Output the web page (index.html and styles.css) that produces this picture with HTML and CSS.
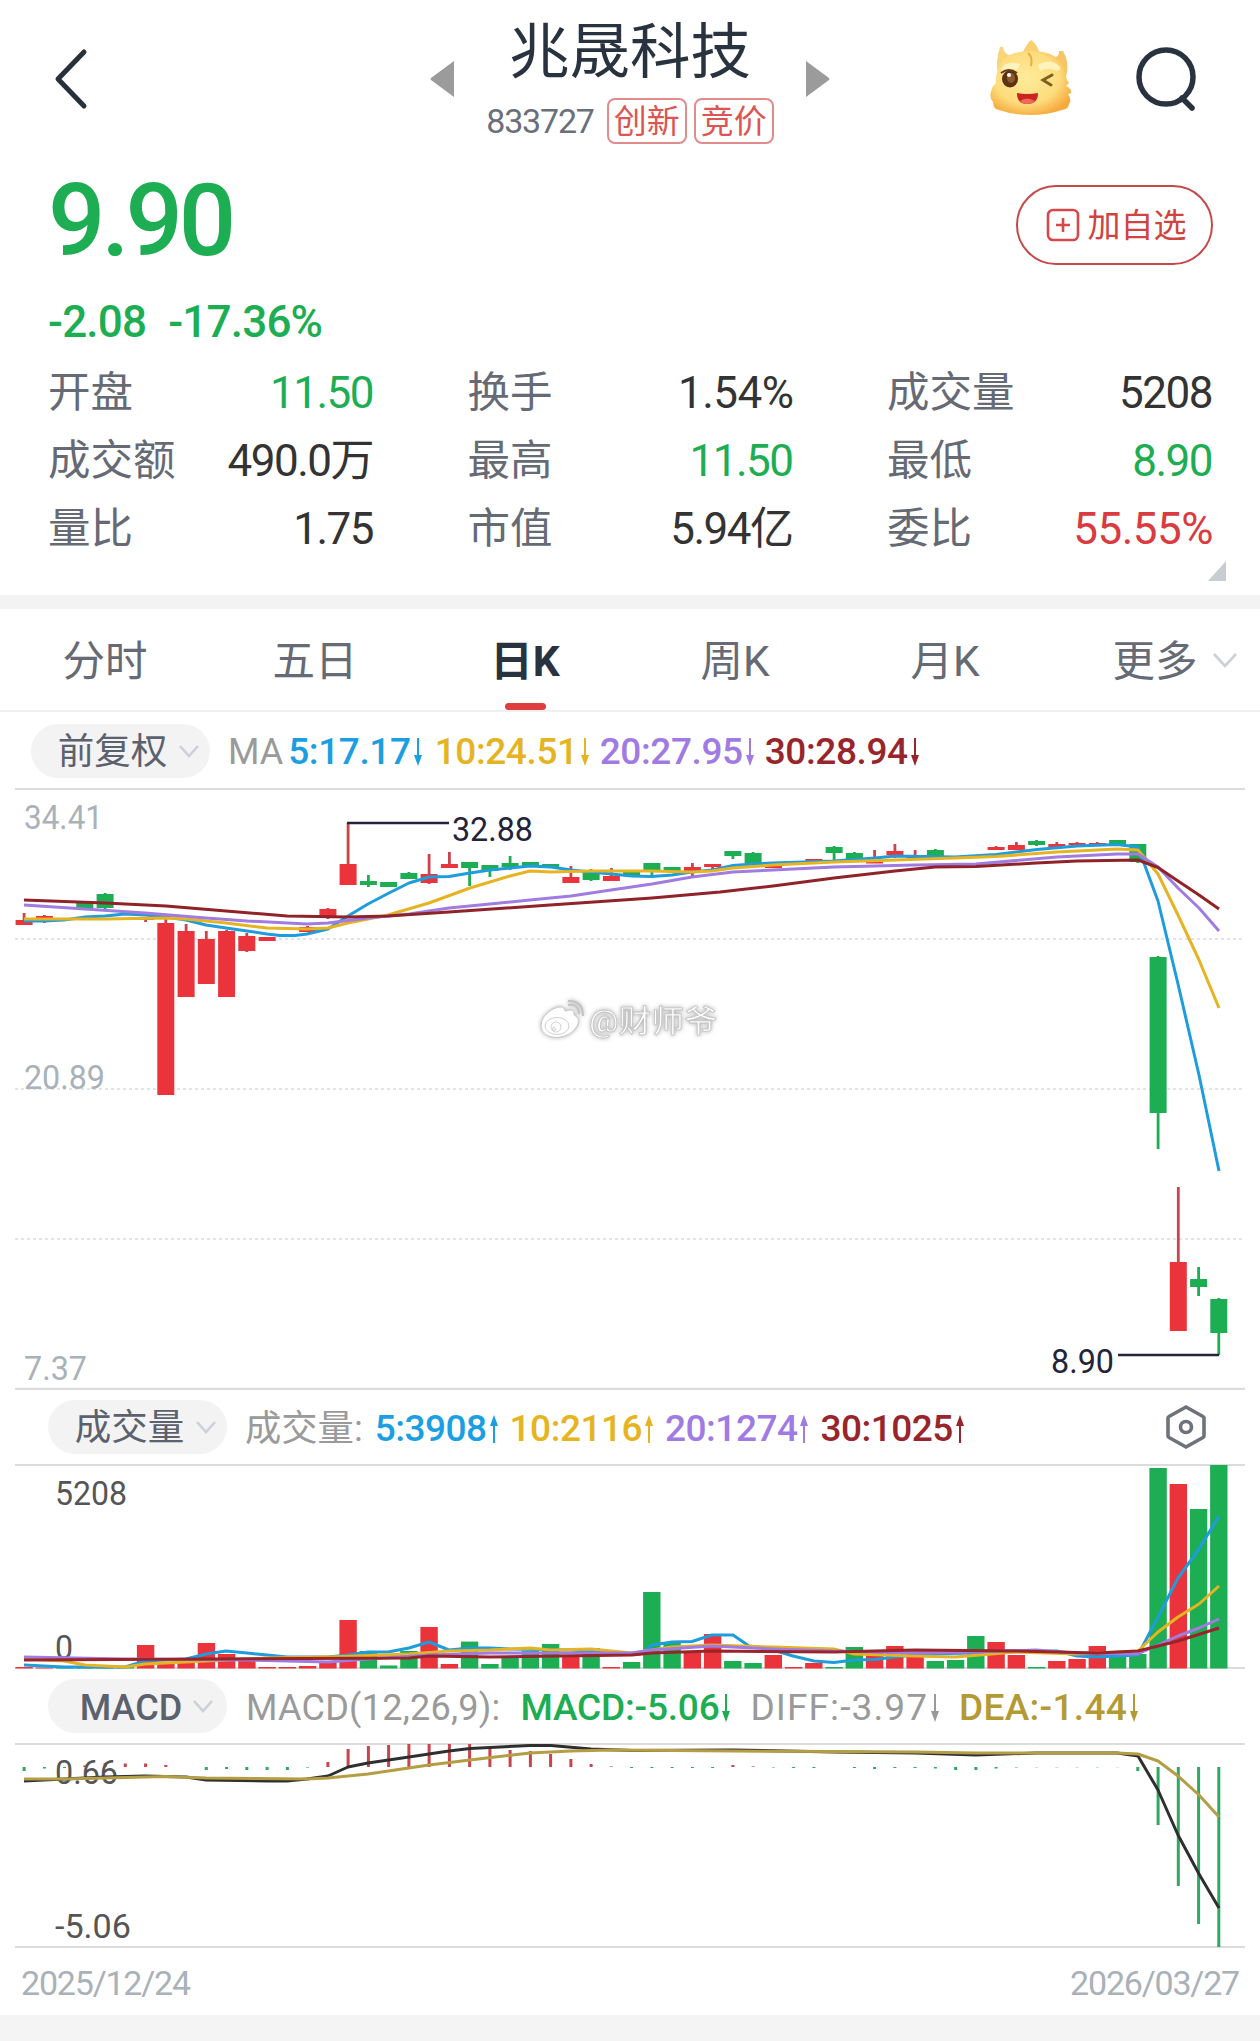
FILE: index.html
```html
<!DOCTYPE html>
<html lang="zh-CN">

<head>
    <meta charset="UTF-8">
    <meta name="viewport" content="width=device-width, initial-scale=1.0">
    <title>兆晟科技 833727</title>
    <link rel="stylesheet" href="styles.css">
</head>

<body>
    <div class="page">
        <header class="header">
            <svg class="back" width="34" height="62" viewBox="0 0 34 62"><path d="M30 4 L4 31 L30 58"/></svg>
            <div class="switcher">
                <svg width="24" height="36" viewBox="0 0 24 36"><path d="M24 0 V36 L1 19 Q0 18 1 17 Z" fill="#9b9b9b"/></svg>
                <div class="stock">
                    <h1>兆晟科技</h1>
                    <div class="code">
                        <span class="num">833727</span>
                        <span class="tag">创新</span>
                        <span class="tag">竞价</span>
                    </div>
                </div>
                <svg width="24" height="36" viewBox="0 0 24 36"><path d="M0 0 V36 L23 19 Q24 18 23 17 Z" fill="#9b9b9b"/></svg>
            </div>
            <div class="tools">
                <svg width="84" height="78" viewBox="0 0 84 78">
                    <defs>
                        <radialGradient id="face" cx="45%" cy="42%" r="62%">
                            <stop offset="0" stop-color="#ffeb9c"/>
                            <stop offset="0.65" stop-color="#fddc7d"/>
                            <stop offset="1" stop-color="#f6a93c"/>
                        </radialGradient>
                    </defs>
                    <path d="M11 7 Q6 22 9 34 L26 16 Q15 16 14 7 Z" fill="#f9d57a"/>
                    <path d="M74 11 Q81 22 77 37 L59 18 Q71 19 70 11 Z" fill="#f6c566"/>
                    <path d="M33 14 Q38 3 42 0 Q49 5 51 15 Z" fill="#f9cf70"/>
                    <path d="M9 30 Q13 11 42 11 Q71 11 76 31 Q77 40 80 43 L77 46 Q83 49 82 53 L79 54 Q83 60 80 64 Q80 69 73 70 Q58 75 42 75 Q24 75 10 70 Q4 69 4 62 Q0 57 2 52 Q3 46 7 43 Q6 38 9 30 Z" fill="url(#face)"/>
                    <path d="M12 29 Q17 20 31 24 Q30 31 23 30 Q17 31 13 34 Z M49 25 Q62 17 71 27 Q72 32 66 30 Q58 27 51 31 Z" fill="#fff3bd"/>
                    <path d="M39 13 Q44 17 42 26" fill="none" stroke="#e6ad48" stroke-width="2"/>
                    <ellipse cx="21" cy="39" rx="8" ry="8.5" fill="#5a3312"/>
                    <ellipse cx="22" cy="38" rx="4" ry="5" fill="#8d5a2b"/>
                    <circle cx="20" cy="35" r="2" fill="#fff"/>
                    <path d="M12 33 Q20 27 28 33" fill="none" stroke="#6b3d14" stroke-width="2"/>
                    <path d="M63 35 L54 40 L62 45" fill="none" stroke="#80601f" stroke-width="3" stroke-linecap="round"/>
                    <path d="M28 53 Q38 55 49 53 Q49 64 38 64 Q28 64 28 53 Z" fill="#c9251e"/>
                    <path d="M31 61 Q38 56 46 61 Q43 64 38 64 Q33 64 31 61 Z" fill="#f0695a"/>
                </svg>
                <svg width="64" height="66" viewBox="0 0 64 66" fill="none" stroke="#28333f" stroke-width="5.5">
                    <circle cx="31" cy="31" r="27"/>
                    <path d="M47 52 L57 62" stroke-linecap="round"/>
                </svg>
            </div>
        </header>

        <section class="quote">
            <div class="price-row">
                <div class="price down">9.90</div>
                <button class="add" type="button">
                    <svg width="34" height="34" viewBox="0 0 34 34" fill="none" stroke="#d5494b" stroke-width="2.6">
                        <rect x="2" y="2" width="30" height="30" rx="5"/>
                        <path d="M17 10 V24 M10 17 H24"/>
                    </svg>
                    <span>加自选</span>
                </button>
            </div>
            <div class="change down"><span>-2.08</span><span>-17.36%</span></div>
            <dl class="stats">
                <div><dt>开盘</dt><dd class="down">11.50</dd></div>
                <div><dt>换手</dt><dd class="pct">1.54%</dd></div>
                <div><dt>成交量</dt><dd>5208</dd></div>
                <div><dt>成交额</dt><dd>490.0万</dd></div>
                <div><dt>最高</dt><dd class="down">11.50</dd></div>
                <div><dt>最低</dt><dd class="down">8.90</dd></div>
                <div><dt>量比</dt><dd>1.75</dd></div>
                <div><dt>市值</dt><dd>5.94亿</dd></div>
                <div><dt>委比</dt><dd class="up pct">55.55%</dd></div>
            </dl>
            <svg class="corner" width="18" height="20" viewBox="0 0 18 20"><path d="M18 0 V20 H0 Z" fill="#c9cdd2"/></svg>
        </section>

        <nav class="tabs">
            <a>分时</a>
            <a>五日</a>
            <a class="active">日K</a>
            <a>周K</a>
            <a>月K</a>
            <a class="more">更多<svg class="chevron" width="26" height="16" viewBox="0 0 26 16"><path d="M2 2 L13 14 L24 2"/></svg></a>
        </nav>

        <div class="legend legend-ma">
            <span class="pill"><span>前复权</span><svg class="chevron" width="22" height="14" viewBox="0 0 22 14"><path d="M2 2 L11 12 L20 2"/></svg></span>
            <span class="name">MA</span>
            <span class="item c5">5:17.17<svg class="arrow" viewBox="0 0 8 28"><path d="M4 0 V20"/><path class="tip" d="M0 17 H8 L4 28 Z"/></svg></span>
            <span class="item c10">10:24.51<svg class="arrow" viewBox="0 0 8 28"><path d="M4 0 V20"/><path class="tip" d="M0 17 H8 L4 28 Z"/></svg></span>
            <span class="item c20">20:27.95<svg class="arrow" viewBox="0 0 8 28"><path d="M4 0 V20"/><path class="tip" d="M0 17 H8 L4 28 Z"/></svg></span>
            <span class="item c30">30:28.94<svg class="arrow" viewBox="0 0 8 28"><path d="M4 0 V20"/><path class="tip" d="M0 17 H8 L4 28 Z"/></svg></span>
        </div>

        <svg id="kline" class="chart" width="1260" height="602" viewBox="0 788 1260 602"></svg>

        <div class="legend legend-vol">
            <span class="pill"><span>成交量</span><svg class="chevron" width="22" height="14" viewBox="0 0 22 14"><path d="M2 2 L11 12 L20 2"/></svg></span>
            <span class="name">成交量:</span>
            <span class="item c5">5:3908<svg class="arrow" viewBox="0 0 8 28"><path d="M4 8 V28"/><path class="tip" d="M0 11 H8 L4 0 Z"/></svg></span>
            <span class="item c10">10:2116<svg class="arrow" viewBox="0 0 8 28"><path d="M4 8 V28"/><path class="tip" d="M0 11 H8 L4 0 Z"/></svg></span>
            <span class="item c20">20:1274<svg class="arrow" viewBox="0 0 8 28"><path d="M4 8 V28"/><path class="tip" d="M0 11 H8 L4 0 Z"/></svg></span>
            <span class="item c30">30:1025<svg class="arrow" viewBox="0 0 8 28"><path d="M4 8 V28"/><path class="tip" d="M0 11 H8 L4 0 Z"/></svg></span>
            <svg class="settings" width="42" height="46" viewBox="0 0 42 46"><path d="M21 3 L38 12.5 Q39 13 39 14 V32 Q39 33 38 33.5 L21 43 L4 33.5 Q3 33 3 32 V14 Q3 13 4 12.5 Z"/><circle cx="21" cy="23" r="5.5"/></svg>
        </div>

        <svg id="volume" class="chart" width="1260" height="205" viewBox="0 1464 1260 205"></svg>

        <div class="legend legend-macd">
            <span class="pill"><span>MACD</span><svg class="chevron" width="22" height="14" viewBox="0 0 22 14"><path d="M2 2 L11 12 L20 2"/></svg></span>
            <span class="name">MACD(12,26,9):</span>
            <span class="item down">MACD:-5.06<svg class="arrow" viewBox="0 0 8 28"><path d="M4 0 V20"/><path class="tip" d="M0 17 H8 L4 28 Z"/></svg></span>
            <span class="item diff">DIFF:-3.97<svg class="arrow" viewBox="0 0 8 28"><path d="M4 0 V20"/><path class="tip" d="M0 17 H8 L4 28 Z"/></svg></span>
            <span class="item dea">DEA:-1.44<svg class="arrow" viewBox="0 0 8 28"><path d="M4 0 V20"/><path class="tip" d="M0 17 H8 L4 28 Z"/></svg></span>
        </div>

        <svg id="macd" class="chart" width="1260" height="206" viewBox="0 1743 1260 206"></svg>

        <div class="dates"><span>2025/12/24</span><span>2026/03/27</span></div>
        <footer class="bottom"></footer>
    </div>

    <script src="charts.js"></script>
</body>

</html>
```

FILE: styles.css
```css
* {
    margin: 0;
    padding: 0;
    box-sizing: border-box;
}

body {
    background: #fff;
    color: #333;
    font-family: Roboto, "Noto Sans CJK SC", sans-serif;
}

svg {
    display: block;
    flex: none;
}

.page {
    width: 1260px;
    height: 2041px;
    display: flex;
    flex-direction: column;
    overflow: hidden;
}

.down {
    color: #1dad52;
}

.up {
    color: #d93b40;
}

/* header */
.header {
    height: 157px;
    display: grid;
    grid-template-columns: 1fr auto 1fr;
    align-items: center;
    padding: 0 61px 0 54px;
}

.back path {
    fill: none;
    stroke: #28303b;
    stroke-width: 5;
    stroke-linecap: round;
    stroke-linejoin: round;
}

.switcher {
    display: flex;
    align-items: center;
    margin-left: 7px;
}

.stock {
    width: 352px;
    height: 157px;
    padding-top: 11px;
    text-align: center;
}

.stock h1 {
    font-size: 60.5px;
    font-weight: 400;
    line-height: 84px;
    color: #28333f;
}

.code {
    display: flex;
    justify-content: center;
    align-items: center;
    gap: 7px;
    margin-top: 2px;
}

.num {
    font-size: 34px;
    line-height: 46px;
    padding-top: 1px;
    letter-spacing: -1.2px;
    color: #6b6f7a;
    margin-right: 6px;
}

.tag {
    height: 46px;
    width: 80px;
    border: 2px solid #e08c8c;
    border-radius: 8px;
    font-size: 33px;
    line-height: 43px;
    color: #dc5552;
}

.tools {
    display: flex;
    align-items: center;
    justify-content: flex-end;
    gap: 62px;
}

/* quote */
.quote {
    height: 438px;
    padding: 0 48px;
    position: relative;
}

.price-row {
    height: 124px;
    display: flex;
    justify-content: space-between;
    align-items: center;
}

.price {
    font-size: 101px;
    font-weight: 500;
    letter-spacing: -4px;
    padding-top: 3px;
}

.add {
    width: 197px;
    height: 80px;
    margin: 12px -1px 0 0;
    padding-left: 3px;
    display: flex;
    align-items: center;
    justify-content: center;
    gap: 8px;
    background: #fff;
    border: 2px solid #c44a4a;
    border-radius: 40px;
    font-family: inherit;
    font-size: 33px;
    line-height: 74px;
    color: #cf4341;
}

.add span {
    margin-top: 1px;
}

.change {
    height: 78px;
    line-height: 82px;
    font-size: 44px;
    letter-spacing: -0.8px;
    display: flex;
    gap: 22px;
    font-weight: 500;
}

.stats {
    display: grid;
    grid-template-columns: repeat(3, 325px);
    justify-content: space-between;
}

.stats div {
    height: 68px;
    line-height: 68px;
    display: flex;
    justify-content: space-between;
}

.stats dt {
    font-size: 42.5px;
    color: #656a75;
}

.stats dd {
    font-size: 44px;
    letter-spacing: -1.5px;
}

.stats .pct {
    letter-spacing: -0.5px;
    margin-right: -1px;
}

.corner {
    position: absolute;
    right: 34px;
    bottom: 14px;
}

/* tabs */
.tabs {
    height: 117px;
    display: grid;
    grid-template-columns: repeat(6, 1fr);
    border-top: 14px solid #f3f3f3;
    border-bottom: 2px solid #f0f0f0;
}

.tabs a {
    position: relative;
    text-align: center;
    font-size: 42.5px;
    line-height: 105px;
    height: 101px;
    color: #656a75;
}

.tabs .active {
    color: #28333f;
    font-weight: 700;
}

.tabs .active::after {
    content: "";
    position: absolute;
    left: 85px;
    bottom: 0;
    width: 41px;
    height: 7px;
    border-radius: 4px;
    background: #e03d3e;
}

.more .chevron {
    position: absolute;
    right: 22px;
    top: 43px;
}

.chevron path {
    fill: none;
    stroke: #cdd0d4;
    stroke-width: 2.6;
}

/* indicator rows */
.legend {
    display: flex;
    align-items: center;
    font-size: 37px;
    white-space: nowrap;
}

.legend-ma {
    height: 76px;
    padding: 2px 0 0 31px;
}

.legend-vol {
    height: 74px;
    padding: 0 54px 0 48px;
}

.legend-macd {
    height: 74px;
    padding: 0 0 0 48px;
}

.pill {
    width: 179px;
    height: 54px;
    border-radius: 27px;
    background: #f3f3f4;
    display: flex;
    align-items: center;
    justify-content: center;
    gap: 11px;
    padding-left: 17px;
    font-size: 36.5px;
    line-height: 50px;
    color: #5b616d;
}

.pill span {
    margin-top: 1px;
}

.name {
    margin-left: 18px;
    color: #9a9a9a;
    font-size: 36px;
    line-height: 54px;
}

.item {
    display: flex;
    align-items: center;
    margin-left: 11px;
    font-weight: 500;
    line-height: 54px;
}

.arrow {
    width: 8px;
    height: 28px;
    margin-left: 3px;
    fill: none;
    stroke: currentColor;
    stroke-width: 2;
}

.arrow .tip {
    fill: currentColor;
    stroke: none;
}

.legend-ma .item {
    letter-spacing: -0.4px;
    padding-top: 1px;
}

.legend-ma .name {
    margin-right: -6px;
    padding-top: 1px;
}

.legend-ma .c10 {
    margin-left: 13px;
}

.legend-vol .name {
    padding-top: 4px;
    font-size: 36.3px;
}

.legend-vol .item {
    letter-spacing: -0.5px;
    margin-left: 12px;
    padding-top: 4px;
}

.legend-macd .item,
.legend-macd .name {
    padding-top: 4px;
}

.legend-macd .item {
    margin-left: 20px;
    letter-spacing: -0.2px;
}

.legend-macd .name {
    margin-left: 19px;
    letter-spacing: 0.25px;
}

.legend-macd .pill {
    font-weight: 500;
    font-size: 36px;
    gap: 10px;
    padding-left: 19px;
}

.legend-macd .pill span {
    margin-top: 3px;
}

.c5 {
    color: #1b9fe2;
}

.c10 {
    color: #e6b422;
}

.c20 {
    color: #a07be4;
}

.c30 {
    color: #98252b;
}

.legend .diff {
    color: #9a9a9a;
    font-weight: 400;
    letter-spacing: 1.1px;
}

.legend .dea {
    color: #b39a35;
    letter-spacing: 0.3px;
}

.settings {
    margin-left: auto;
    fill: none;
    stroke: #6d727b;
    stroke-width: 3.6;
}

.legend-vol .settings {
    margin-right: -1px;
}

/* charts */
.chart text {
    font-size: 34px;
}

.axis {
    fill: #a9b1b9;
}

.axis-dark {
    fill: #555;
}

.mark {
    fill: #23233a;
}

.watermark {
    fill: #fff;
    stroke: #c4c4c4;
    stroke-width: 0.8;
    filter: drop-shadow(0 0 2px #aaa);
}

.dates {
    height: 66px;
    padding: 2px 21px 0 21px;
    display: flex;
    justify-content: space-between;
    align-items: center;
    font-size: 34px;
    letter-spacing: -1.2px;
    color: #a9b1b9;
}

.bottom {
    flex: 1;
    background: #f4f4f4;
}
```

FILE: charts.js
```javascript
const RED = '#ea333b';
const GREEN = '#1dad52';
const WICK_RED = '#c9444b';
const X0 = 24.1;
const STEP = 20.25;

const x = i => X0 + STEP * i;
const rect = (cx, w, top, bottom, fill) =>
    `<rect x="${(cx - w / 2).toFixed(1)}" y="${top}" width="${w}" height="${(bottom - top).toFixed(1)}" fill="${fill}"/>`;
const hline = (y, w = 2, x1 = 15, x2 = 1245, color = '#dcdcdc') =>
    `<path d="M${x1} ${y} H${x2}" stroke="${color}" stroke-width="${w}"/>`;
const dashed = y =>
    `<path d="M15 ${y} H1245" stroke="#d9dddf" stroke-width="1.6" stroke-dasharray="3 3"/>`;
const line = (points, color, w = 3) =>
    `<polyline points="${points}" fill="none" stroke="${color}" stroke-width="${w}" stroke-linejoin="round"/>`;
const label = (tx, ty, width, cls, text) =>
    `<text x="${tx}" y="${ty}" textLength="${width}" lengthAdjust="spacingAndGlyphs" class="${cls}">${text}</text>`;

// [index, r|g, body top, body bottom, wick top, wick bottom]
const candles = [
    [0, 'r', 920, 925, 913, 925], [1, 'r', 916, 922, 915, 923], [3, 'g', 902, 908, 902, 908],
    [4, 'g', 894, 908, 893, 910], [6, 'r', 919, 920, 918, 922], [7, 'r', 923, 1095, 919, 1095],
    [8, 'r', 931, 997, 924, 997], [9, 'r', 939, 984, 931, 984], [10, 'r', 931, 997, 930, 997],
    [11, 'r', 936, 951, 933, 952], [12, 'r', 937, 941, 937, 941], [14, 'r', 927, 932, 926, 932],
    [15, 'r', 909, 918, 908, 919], [16, 'r', 864, 885, 823, 885], [17, 'g', 881, 885, 875, 887],
    [18, 'g', 882, 887, 882, 887], [19, 'g', 873, 879, 872, 879], [20, 'r', 874, 883, 854, 884],
    [21, 'r', 864, 868, 852, 868], [22, 'g', 862, 868, 862, 886], [23, 'g', 865, 871, 865, 877],
    [24, 'g', 863, 867, 856, 870], [25, 'g', 862, 866, 862, 866], [26, 'g', 864, 867, 864, 867],
    [27, 'r', 877, 883, 866, 883], [28, 'g', 872, 880, 869, 881], [29, 'r', 876, 881, 868, 881],
    [30, 'g', 872, 875, 872, 875], [31, 'g', 863, 870, 863, 875], [32, 'g', 867, 872, 867, 872],
    [33, 'r', 867, 871, 863, 876], [34, 'r', 864, 867, 864, 869], [35, 'g', 851, 856, 851, 859],
    [36, 'g', 853, 863, 852, 868], [37, 'r', 865, 868, 865, 868], [38, 'r', 863, 865, 863, 865],
    [39, 'r', 859, 863, 859, 863], [40, 'g', 847, 853, 846, 860], [41, 'g', 853, 860, 852, 860],
    [42, 'r', 862, 863.5, 850, 858], [43, 'r', 851, 855, 844, 858], [44, 'r', 857, 858, 850, 858],
    [45, 'g', 850, 857, 849, 857], [48, 'r', 847, 850, 846, 850], [49, 'r', 845, 850, 842, 850],
    [50, 'g', 841, 845, 840, 846], [51, 'r', 844, 847, 842, 847], [52, 'r', 843, 845, 842, 845],
    [53, 'r', 843, 845, 842, 845], [54, 'g', 840, 845, 840, 845], [55, 'g', 844, 862, 844, 863],
    [56, 'g', 957, 1113, 956, 1149], [57, 'r', 1262, 1331, 1187, 1331], [58, 'g', 1279, 1287, 1267, 1296],
    [59, 'g', 1299, 1333, 1298, 1355]
];

const ma5 = '24,921 44,921 64,920 85,917 105,916 125,914 145,915 166,917 186,920 206,925 226,928 247,931 267,934 280,935.5 295,935.5 307,934 328,929 348,916 368,904 388,893.5 409,883 429,877 449,876.5 470,873 490,870 510,868 530,866 551,867 571,870 591,872 611,874 632,876 652,876.5 672,875 692,872 712,870 733,865.5 753,864 773,863 834,861 875,858 895,856 955,857 996,854.5 1037,849.5 1077,846 1117,844.5 1138,847 1158,901 1178,984 1199,1075 1219,1171';
const ma10 = '24,919 105,919 166,918 186,919 226,923 267,928 307,929 328,928 348,923 388,915 429,903 470,888 510,876 530,871 551,872 590,871 650,871 692,872 712,871 733,868 773,865 834,862 895,860 955,858 996,856.5 1057,852 1117,849 1138,850 1158,874 1178,915 1199,960 1219,1008';
const ma20 = '24,905 85,909 145,913 206,918 247,921 307,924 328,923 368,918 409,914 449,908 490,904 530,900 571,896 611,890 652,884 692,877 733,872 773,870 834,867 915,865 976,864 1057,857 1117,854 1138,854 1158,867 1178,888 1199,908 1219,931';
const ma30 = '24,900 105,903 166,906 226,911 287,916 348,917 388,916 449,912 550,905 652,898 720,892 773,886 834,878 895,871 935,867 976,866.5 1036,863 1077,861 1138,860 1158,867.5 1178,881 1199,895 1219,909';

let k = hline(789) + dashed(939) + dashed(1089) + dashed(1239) + hline(1389, 2.6);
candles.forEach(([i, c, top, bottom, high, low]) => {
    k += rect(x(i), 2.8, high, low, c === 'r' ? WICK_RED : GREEN);
    k += rect(x(i), 17, top, bottom, c === 'r' ? RED : GREEN);
});
k += line(ma5, '#1f9cdb') + line(ma10, '#e6b422') + line(ma20, '#a07be0') + line(ma30, '#8f2329');
k += hline(823, 2.6, 347, 449, '#23233a') + hline(1355, 2.6, 1118, 1219, '#23233a');
k += label(24, 829, 79, 'axis', '34.41') + label(24, 1089, 81, 'axis', '20.89') + label(24, 1380, 63, 'axis', '7.37');
k += label(452, 841, 81, 'mark', '32.88') + label(1051, 1373, 63, 'mark', '8.90');
k += `<g class="watermark">
    <path d="M541 1026 Q541 1016 553 1009 Q564 1004 565 1011 Q575 1008 574 1015 Q581 1018 577 1026 Q572 1036 557 1037.500 Q542 1037 541 1026 Z"/>
    <ellipse cx="557" cy="1026" rx="12" ry="8.500"/>
    <circle cx="556" cy="1027" r="5"/><circle cx="554" cy="1029" r="1.500"/>
    <path d="M568 1005 Q578 1003 579 1014" fill="none" stroke-width="2"/>
    <path d="M568 1001 Q583 1000 583 1016" fill="none" stroke-width="2"/>
    <text x="589" y="1032" textLength="128" lengthAdjust="spacingAndGlyphs" style="font-size:31px">@财师爷</text>
</g>`;
document.getElementById('kline').innerHTML = k;

// volume bars: colour and top edge for each day
const BASE = 1668.5;
const volumes = [
    'r1667', 'r1667.5', 'g1667.5', 'g1667.5', 'g1667', 'g1667', 'r1645', 'r1663', 'r1662', 'r1643',
    'r1654', 'r1658', 'r1667', 'r1667', 'r1666', 'r1662', 'r1620', 'g1651', 'g1665.5', 'g1651',
    'r1627', 'r1664', 'g1641.6', 'g1664', 'g1657', 'g1651', 'g1644', 'r1657', 'g1648', 'r1667',
    'g1662', 'g1592', 'g1642', 'r1651', 'r1634', 'g1661', 'g1663', 'r1655', 'r1667', 'r1663',
    'g1667', 'g1647', 'r1653', 'r1646', 'r1654', 'g1661', 'g1660', 'g1636', 'r1642', 'r1655',
    'g1667', 'r1661', 'r1659', 'r1646', 'g1656', 'g1654', 'g1468', 'r1484', 'g1509', 'g1465'
];
let v = hline(1465) + hline(1668);
volumes.forEach((d, i) => {
    v += rect(x(i), 17.4, +d.slice(1), BASE, d[0] === 'r' ? RED : GREEN);
});
v += label(55, 1505, 72, 'axis-dark', '5208') + label(55, 1659, 18, 'axis-dark', '0');
v += line('24,1665 64,1667 125,1667 145,1661 186,1659 206,1654 226,1651 247,1653 267,1655 287,1657 328,1657 348,1655 368,1652 388,1652 409,1648 429,1642 449,1650 470,1648 490,1648 510,1649 571,1650 611,1653 640,1654 652,1645 672,1642 692,1641.5 712,1635 733,1635 749,1646 773,1650 793,1656 814,1661 834,1662.5 854,1660 875,1659.5 895,1657 925,1654 976,1653 996,1652 1057,1651 1077,1656 1097,1657 1138,1655 1158,1617 1178,1578 1199,1549 1219,1516', '#1f9cdb');
v += line('24,1659 64,1661 85,1665 125,1667 145,1664 206,1661 267,1658 328,1657 409,1654 449,1651 490,1650 530,1648 551,1650 591,1649 632,1653 672,1647 712,1645 773,1647 834,1649 854,1654 915,1656 955,1657 1016,1652 1077,1654 1138,1651 1158,1632 1178,1617 1199,1604 1219,1586', '#e6b422');
v += line('24,1657 125,1659 247,1660 287,1661 328,1662 368,1659 429,1655 490,1653 632,1653 652,1650 712,1646 773,1649 834,1651 915,1653 976,1652 1036,1650 1077,1653 1138,1654 1158,1645 1178,1636 1199,1628 1219,1619', '#a07be0');
v += line('24,1660 409,1658 429,1656 490,1657 632,1655 652,1653 712,1651 834,1652 915,1650 1016,1651 1097,1653 1138,1651 1178,1641 1219,1628', '#98252b');
document.getElementById('volume').innerHTML = v;

// macd histogram: far end of each bar measured from the zero line
const ZERO = 1767;
const hist = [
    1771, 1768.5, 1768, 1765.5, 1763, 1763.5, 1763.5, 1765, 1767, 1770,
    1769, 1770, 1770, 1770, 1767.6, 1762, 1749, 1746, 1745, 1744,
    1744, 1744, 1744, 1749, 1750, 1751, 1754, 1759, 1764, 1766.4,
    1768, 1768, 1768, 1768, 1768, 1765, 1766.4, 1767.5, 1768, 1768,
    1767, 1768, 1769, 1768, 1768, 1768.5, 1770, 1770, 1768.5, 1767.5,
    1767.3, 1767.3, 1767.3, 1767.3, 1767.2, 1771, 1825, 1886, 1924, 1947
];
let m = hline(1744) + hline(1947);
hist.forEach((y, i) => {
    m += rect(x(i), 3, Math.min(y, ZERO), Math.max(y, ZERO), y < ZERO ? WICK_RED : '#2fa862');
});
m += label(55, 1784, 63, 'axis-dark', '0.66') + label(55, 1938, 76, 'axis-dark', '-5.06');
m += line('24,1781 105,1777 145,1776 186,1777 206,1780 267,1781 287,1781 307,1779 328,1776 348,1767 368,1763 409,1757 449,1751 470,1748.5 530,1745.5 551,1745.5 591,1749 632,1750.5 733,1750 834,1752 915,1753 976,1755 1036,1753 1117,1753 1138,1756 1158,1790 1178,1835 1199,1874 1219,1908', '#2f2f2f');
m += line('24,1779 64,1779 105,1778 166,1776.5 206,1778 307,1779 328,1778 368,1774 429,1765 470,1760 530,1753 571,1751 611,1750 733,1751 834,1751.5 915,1752 976,1753 1117,1753 1138,1754 1158,1761 1178,1776 1199,1795 1219,1817', '#b39d45');
document.getElementById('macd').innerHTML = m;
```
